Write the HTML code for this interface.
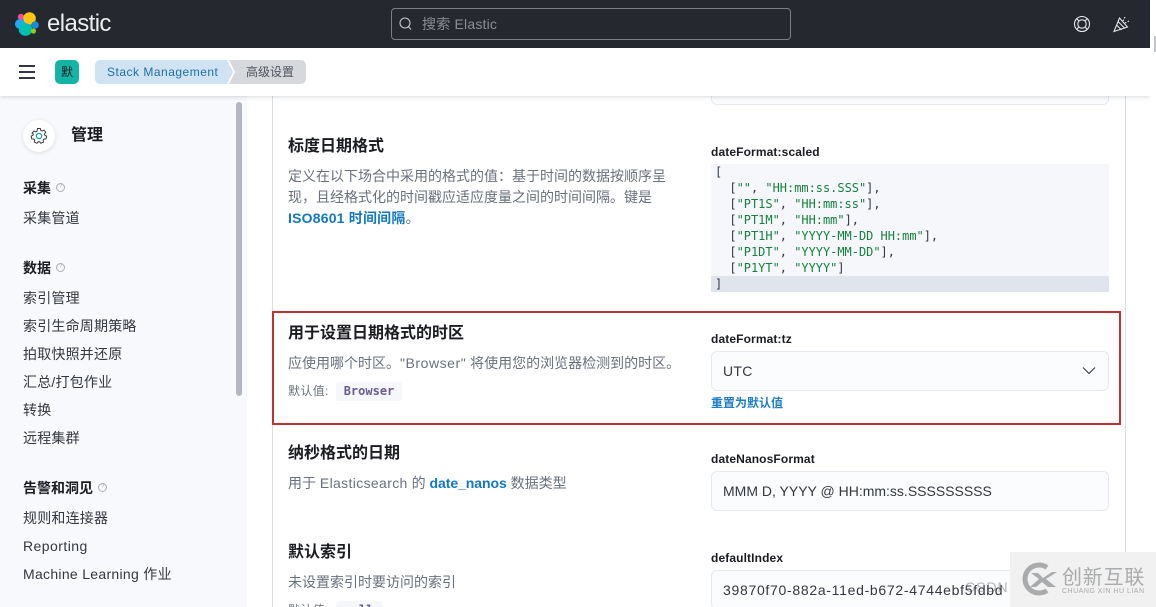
<!DOCTYPE html>
<html lang="zh"><head><meta charset="utf-8"><title>高级设置</title>
<style>
*{box-sizing:border-box;margin:0;padding:0}
html,body{width:1156px;height:607px;overflow:hidden;background:#fff}
body{position:relative;font-family:"Liberation Sans","Noto Sans CJK SC",sans-serif;color:#343741}
.a{position:absolute;white-space:nowrap}
.nav{font-size:14px;line-height:20px;left:23px;color:#343741;letter-spacing:.2px}
.navh{font-size:14px;line-height:20px;left:23px;color:#1a1c21;font-weight:700}
.q{position:absolute;width:9px;height:9px;border:1px solid #a9adb5;border-radius:50%;font-size:6px;line-height:7px;text-align:center;color:#a9adb5}
.h{font-size:16px;line-height:22px;left:288px;font-weight:700;color:#1a1c21}
.d{font-size:14px;line-height:21px;left:288px;color:#69707d}
.lb{font-size:12px;line-height:16px;left:711px;font-weight:700;color:#1a1c21;letter-spacing:.12px}
.inp{position:absolute;left:711px;width:398px;background:#fbfcfd;border:1px solid #e6e9ef;border-radius:6px;font-size:14px;color:#343741;padding-left:11px;white-space:nowrap;overflow:hidden}
.m{font-family:"DejaVu Sans Mono","Liberation Mono",monospace;font-size:11.96px;line-height:16px;left:715px;color:#343741;white-space:pre}
.m b{font-weight:400;color:#17803d}
a{color:#1278c0;text-decoration:none}
</style></head><body>

<!-- sidebar -->
<div class="a" style="left:0;top:96px;width:247px;height:511px;background:#f8f9fc"></div>
<div class="a" style="left:236px;top:102px;width:6px;height:294px;background:#b4b7bf;border-radius:3px"></div>
<div class="a" style="left:23px;top:120px;width:32px;height:32px;border-radius:50%;background:#fff;box-shadow:0 1px 4px rgba(60,70,90,.15)"></div>
<svg class="a" style="left:30px;top:127px" width="18" height="18" viewBox="0 0 18 18" fill="none">
<path d="M7.400 1.500h3.200l.5 2.200 1.500.7 2-1.100 2 2.400-1.400 1.800.4 1.600 2 1-.7 3-2.200.1-1 1.300.4 2.200-2.900 1.300-1.400-1.700H8.200L6.800 18l-2.900-1.300.4-2.200-1-1.300-2.200-.1-.7-3 2-1 .4-1.600L1.400 6.700l2-2.400 2 1.100 1.500-.7z" transform="translate(.8 .1) scale(.9)" stroke="#343741" stroke-width="1.100"/>
<circle cx="9" cy="9" r="2.700" stroke="#00a69b" stroke-width="1.100"/></svg>
<div class="a" style="left:71px;top:125px;font-size:16px;line-height:22px;font-weight:700;color:#1a1c21">管理</div>

<div class="a navh" style="top:178px">采集</div><div class="q" style="left:56px;top:183px">?</div>
<div class="a nav" style="top:208px">采集管道</div>
<div class="a navh" style="top:258px">数据</div><div class="q" style="left:56px;top:263px">?</div>
<div class="a nav" style="top:288px">索引管理</div>
<div class="a nav" style="top:316px">索引生命周期策略</div>
<div class="a nav" style="top:344px">拍取快照并还原</div>
<div class="a nav" style="top:372px">汇总/打包作业</div>
<div class="a nav" style="top:400px">转换</div>
<div class="a nav" style="top:428px">远程集群</div>
<div class="a navh" style="top:478px">告警和洞见</div><div class="q" style="left:98px;top:483px">?</div>
<div class="a nav" style="top:508px">规则和连接器</div>
<div class="a nav" style="top:536px;letter-spacing:.45px">Reporting</div>
<div class="a nav" style="top:564px;letter-spacing:.3px">Machine Learning 作业</div>

<!-- panel -->
<div class="a" style="left:272px;top:96px;width:854px;height:511px;border-left:1px solid #d9dde5;border-right:1px solid #d9dde5"></div>
<div class="a" style="left:711px;top:90px;width:398px;height:15px;border:1px solid #e6e9ef;border-radius:0 0 6px 6px;background:#fbfcfd"></div>

<div class="a h" style="top:136px">标度日期格式</div>
<div class="a d" style="top:166px">定义在以下场合中采用的格式的值：基于时间的数据按顺序呈</div>
<div class="a d" style="top:187px">现，且经格式化的时间戳应适应度量之间的时间间隔。键是</div>
<div class="a d" style="top:208px"><a style="font-weight:700;letter-spacing:.2px" href="#">ISO8601 时间间隔</a>。</div>

<div class="a lb" style="top:144px">dateFormat:scaled</div>
<div class="a" style="left:711px;top:164px;width:398px;height:128px;background:#f5f7fa"></div>
<div class="a" style="left:711px;top:276px;width:398px;height:16px;background:#e0e4ec"></div>
<div class="a m" style="top:164px">[</div>
<div class="a m" style="top:180px">  [<b>""</b>, <b>"HH:mm:ss.SSS"</b>],</div>
<div class="a m" style="top:196px">  [<b>"PT1S"</b>, <b>"HH:mm:ss"</b>],</div>
<div class="a m" style="top:212px">  [<b>"PT1M"</b>, <b>"HH:mm"</b>],</div>
<div class="a m" style="top:228px">  [<b>"PT1H"</b>, <b>"YYYY-MM-DD HH:mm"</b>],</div>
<div class="a m" style="top:244px">  [<b>"P1DT"</b>, <b>"YYYY-MM-DD"</b>],</div>
<div class="a m" style="top:260px">  [<b>"P1YT"</b>, <b>"YYYY"</b>]</div>
<div class="a m" style="top:276px">]</div>

<!-- highlighted -->
<div class="a h" style="top:323px">用于设置日期格式的时区</div>
<div class="a d" style="top:353px">应使用哪个时区。<span style="letter-spacing:.55px">"Browser"</span> 将使用您的浏览器检测到的时区。</div>
<div class="a" style="left:288px;top:383px;font-size:12px;line-height:16px;color:#69707d;letter-spacing:.35px">默认值:</div>
<div class="a" style="left:336px;top:382px;width:66px;height:19px;background:#f5f7fa;border-radius:3px;font:700 12px/19px 'DejaVu Sans Mono','Liberation Mono',monospace;color:#6b5a93;text-align:center">Browser</div>
<div class="a lb" style="top:331px">dateFormat:tz</div>
<div class="inp" style="top:351px;height:40px;line-height:38px;font-size:14px;letter-spacing:.3px">UTC</div>
<svg class="a" style="left:1082px;top:365px" width="14" height="12" viewBox="0 0 14 12" fill="none"><path d="M1 2.500l6 6 6-6" stroke="#343741" stroke-width="1.100"/></svg>
<div class="a" style="left:711px;top:395px;font-size:12px;line-height:16px;font-weight:700;color:#1f7fc4">重置为默认值</div>
<div class="a" style="left:272px;top:311px;width:849px;height:114px;border:2px solid #c0312f"></div>

<div class="a h" style="top:443px">纳秒格式的日期</div>
<div class="a d" style="top:473px">用于 <span style="letter-spacing:.35px">Elasticsearch</span> 的 <a style="font-weight:700;letter-spacing:-.05px" href="#">date_nanos</a> 数据类型</div>
<div class="a lb" style="top:451px">dateNanosFormat</div>
<div class="inp" style="top:471px;height:40px;line-height:38px">MMM D, YYYY @ HH:mm:ss.SSSSSSSSS</div>

<div class="a h" style="top:542px">默认索引</div>
<div class="a d" style="top:572px">未设置索引时要访问的索引</div>
<div class="a" style="left:288px;top:602px;font-size:12px;line-height:16px;color:#69707d;letter-spacing:.35px">默认值:</div>
<div class="a" style="left:336px;top:601px;width:46px;height:19px;background:#f5f7fa;border-radius:3px;font:700 12px/19px 'DejaVu Sans Mono',monospace;color:#6b5a93;text-align:center">null</div>
<div class="a lb" style="top:550px">defaultIndex</div>
<div class="inp" style="top:570px;height:40px;line-height:38px;letter-spacing:.7px">39870f70-882a-11ed-b672-4744ebf5fdbd</div>

<!-- second bar -->
<div class="a" style="left:0;top:48px;width:1150px;height:48px;background:#fff;box-shadow:0 1px 4px rgba(60,70,90,.2)"></div>
<div class="a" style="left:19px;top:65px;width:16px;height:2px;background:#343741"></div>
<div class="a" style="left:19px;top:71px;width:16px;height:2px;background:#343741"></div>
<div class="a" style="left:19px;top:77px;width:16px;height:2px;background:#343741"></div>
<div class="a" style="left:55px;top:60px;width:24px;height:24px;background:#14b4a6;border-radius:5px;text-align:center;font-size:12px;line-height:24px;color:#1a1c21">默</div>
<svg class="a" style="left:95px;top:60px" width="211" height="24" viewBox="0 0 211 24"><path d="M134 0h72a5 5 0 0 1 5 5v14a5 5 0 0 1-5 5h-72l6-12z" fill="#d6d8dc"/><path d="M5 0h127l6 12-6 12H5a5 5 0 0 1-5-5V5a5 5 0 0 1 5-5z" fill="#cfe3f3"/></svg>
<div class="a" style="left:107px;top:62px;font-size:12px;line-height:20px;letter-spacing:.5px;color:#1f6fa8">Stack Management</div>
<div class="a" style="left:246px;top:62px;font-size:12px;line-height:20px;color:#4f535c">高级设置</div>

<!-- top bar -->
<div class="a" style="left:0;top:0;width:1150px;height:48px;background:#25282f"></div>
<div class="a" style="left:1150px;top:0;width:6px;height:607px;background:#fff"></div>
<div class="a" style="left:1154px;top:36px;width:2px;height:16px;background:#c4c6ca"></div>
<svg class="a" style="left:15px;top:12px" width="25" height="25" viewBox="0 0 25 25">
<circle cx="6" cy="5" r="3.200" fill="#ee5097"/><circle cx="14.500" cy="6.500" r="6.300" fill="#fec514"/><circle cx="20" cy="13" r="3.800" fill="#1b8ad6"/><circle cx="5" cy="12" r="5" fill="#1ba9f5"/><ellipse cx="10.500" cy="17.500" rx="6.800" ry="6.300" fill="#00bfb3"/><circle cx="18.500" cy="19" r="2.600" fill="#93c90e"/></svg>
<div class="a" style="left:47px;top:9px;font-size:24px;line-height:30px;color:#eceded;letter-spacing:-.6px">elastic</div>
<div class="a" style="left:391px;top:8px;width:400px;height:32px;border:1px solid #7b7e85;border-radius:4px;background:#25282f"></div>
<svg class="a" style="left:398px;top:16px" width="16" height="16" viewBox="0 0 16 16" fill="none"><circle cx="7" cy="7" r="5" stroke="#c6c8cc" stroke-width="1.100"/><path d="M10.500 10.800l2.500 2.700" stroke="#c6c8cc" stroke-width="1.100"/></svg>
<div class="a" style="left:422px;top:14px;font-size:14px;line-height:20px;color:#8b8e95;letter-spacing:.2px">搜索 Elastic</div>
<svg class="a" style="left:1073px;top:15px" width="18" height="18" viewBox="0 0 18 18" fill="none" stroke="#e6e7e9" stroke-width="1.100"><circle cx="9" cy="9" r="7.500"/><circle cx="9" cy="9" r="4.200"/><path d="M3.700 3.700l2.400 2.400M14.300 3.700l-2.400 2.400M3.700 14.300l2.400-2.400M14.300 14.300l-2.400-2.400"/></svg>
<svg class="a" style="left:1113px;top:15px" width="18" height="18" viewBox="0 0 18 18" fill="none" stroke="#e6e7e9" stroke-width="1.100"><path d="M1 16.500L6.500 3l8 9z"/><path d="M3.500 10l5 5M5 6.500l7 7"/><path d="M10 6l2-4M12 8l4-2" stroke-dasharray="1.500 1.500"/></svg>

<!-- watermark -->
<div class="a" style="left:965px;top:578px;font-size:14px;line-height:18px;letter-spacing:1px;color:rgba(90,90,90,.45)">CSDN</div>
<div class="a" style="left:1010px;top:552px;width:146px;height:55px;background:#f1f1f1"></div>
<svg class="a" style="left:1020px;top:561px" width="38" height="36" viewBox="0 0 38 36" fill="none"><path d="M27 6.500A14 14 0 1 0 27 29.500" stroke="#a9abad" stroke-width="5"/><path d="M11 12h7l5 5 9-6h5l-11 7 10 8h-8l-6-5-6 5h-6l9-8z" fill="#a9abad"/></svg>
<div class="a" style="left:1062px;top:563px;font-size:20px;line-height:26px;letter-spacing:.8px;color:#a9abad;font-family:'Noto Sans CJK SC',sans-serif">创新互联</div>
<div class="a" style="left:1062px;top:587px;font-size:7px;line-height:9px;letter-spacing:.5px;color:#a9abad">CHUANG XIN HU LIAN</div>
</body></html>
